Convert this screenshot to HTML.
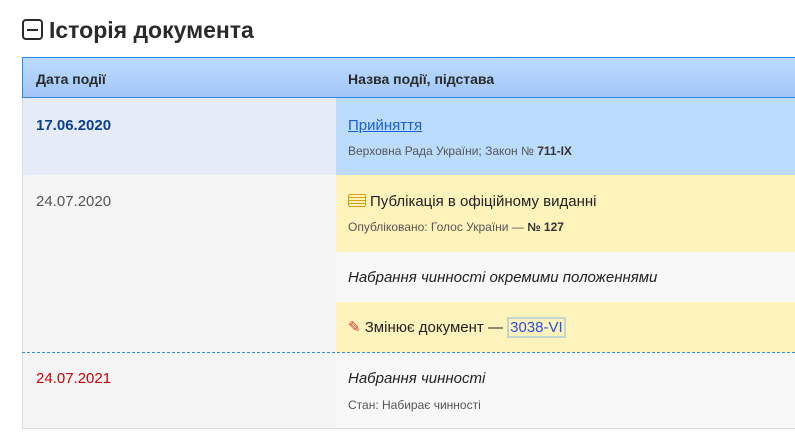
<!DOCTYPE html>
<html><head><meta charset="utf-8"><style>
body{margin:0;width:795px;height:444px;background:#fff;font-family:"Liberation Sans","DejaVu Sans",sans-serif;overflow:hidden;position:relative}
.a{position:absolute}
h1{position:absolute;left:22px;top:17px;margin:0;font-size:23px;font-weight:bold;color:#2a2a2a;letter-spacing:0px}
.box{display:inline-block;width:21px;height:21px;border:2px solid #2a2a2a;border-radius:4px;box-sizing:border-box;position:relative;vertical-align:-2px;margin-right:6px}
.box:after{content:"";position:absolute;left:3px;right:3px;top:7.5px;height:2px;background:#2a2a2a}
.hd{left:22px;top:57px;width:790px;height:41px;background:linear-gradient(#bcdcfe,#a2c6f9);border:1px solid #2c8ae0;box-sizing:border-box}
.th{font-weight:bold;font-size:14px;color:#2a2a2a;top:71px}
.small{font-size:12px;color:#555}
</style></head><body>
<h1><span class="box"></span>Історія документа</h1>
<div class="a hd"></div>
<div class="a th" style="left:36px">Дата події</div>
<div class="a th" style="left:348px">Назва події, підстава</div>
<div class="a" style="left:22px;top:98px;width:1px;height:331px;background:#ddd"></div>
<div class="a" style="left:23px;top:98px;width:313px;height:77px;background:#e6ecf7"></div>
<div class="a" style="left:336px;top:98px;width:459px;height:77px;background:#bbdcfd"></div>
<div class="a" style="left:36px;top:117px;font-weight:bold;font-size:15px;color:#0a3f8f">17.06.2020</div>
<div class="a" style="left:348px;top:117px;font-size:15px;color:#1a5fd1;text-decoration:underline">Прийняття</div>
<div class="a small" style="left:348px;top:144px">Верховна Рада України; Закон № <b style="color:#333">711-IX</b></div>
<div class="a" style="left:23px;top:175px;width:313px;height:177px;background:#f5f5f5"></div>
<div class="a" style="left:336px;top:175px;width:459px;height:77px;background:#fff3bc"></div>
<div class="a" style="left:336px;top:252px;width:459px;height:50px;background:#f8f8f8"></div>
<div class="a" style="left:336px;top:302px;width:459px;height:50px;background:#fff3bc"></div>
<div class="a" style="left:36px;top:193px;font-size:15px;color:#555">24.07.2020</div>
<div class="a" style="left:348px;top:193px;font-size:15px;color:#222"><span style="display:inline-block;width:18px;height:13px;border:1.5px solid #d4a010;border-radius:2px;box-sizing:border-box;vertical-align:-1px;margin-right:4px;background:repeating-linear-gradient(#fff3bc 0 2px,#d4a010 2px 3px)"></span>Публікація в офіційному виданні</div>
<div class="a small" style="left:348px;top:220px">Опубліковано: Голос України — <b style="color:#333">№ 127</b></div>
<div class="a" style="left:348px;top:269px;font-size:15px;font-style:italic;color:#222">Набрання чинності окремими положеннями</div>
<div class="a" style="left:348px;top:318px;font-size:15px;color:#222"><span style="color:#e03030;font-weight:bold">✎</span> Змінює документ — <span style="border:2px solid #c2d6d0;padding:0 1px;color:#2a4fe0">3038-VI</span></div>
<div class="a" style="left:22px;top:352px;width:773px;border-top:1px dashed #2a8ae0"></div>
<div class="a" style="left:23px;top:353px;width:313px;height:75px;background:#f5f5f5"></div>
<div class="a" style="left:336px;top:353px;width:459px;height:75px;background:#f8f8f8"></div>
<div class="a" style="left:36px;top:370px;font-size:15px;color:#c00">24.07.2021</div>
<div class="a" style="left:348px;top:370px;font-size:15px;font-style:italic;color:#222">Набрання чинності</div>
<div class="a small" style="left:348px;top:398px">Стан: Набирає чинності</div>
<div class="a" style="left:22px;top:428px;width:773px;height:1px;background:#ddd"></div>
</body></html>
